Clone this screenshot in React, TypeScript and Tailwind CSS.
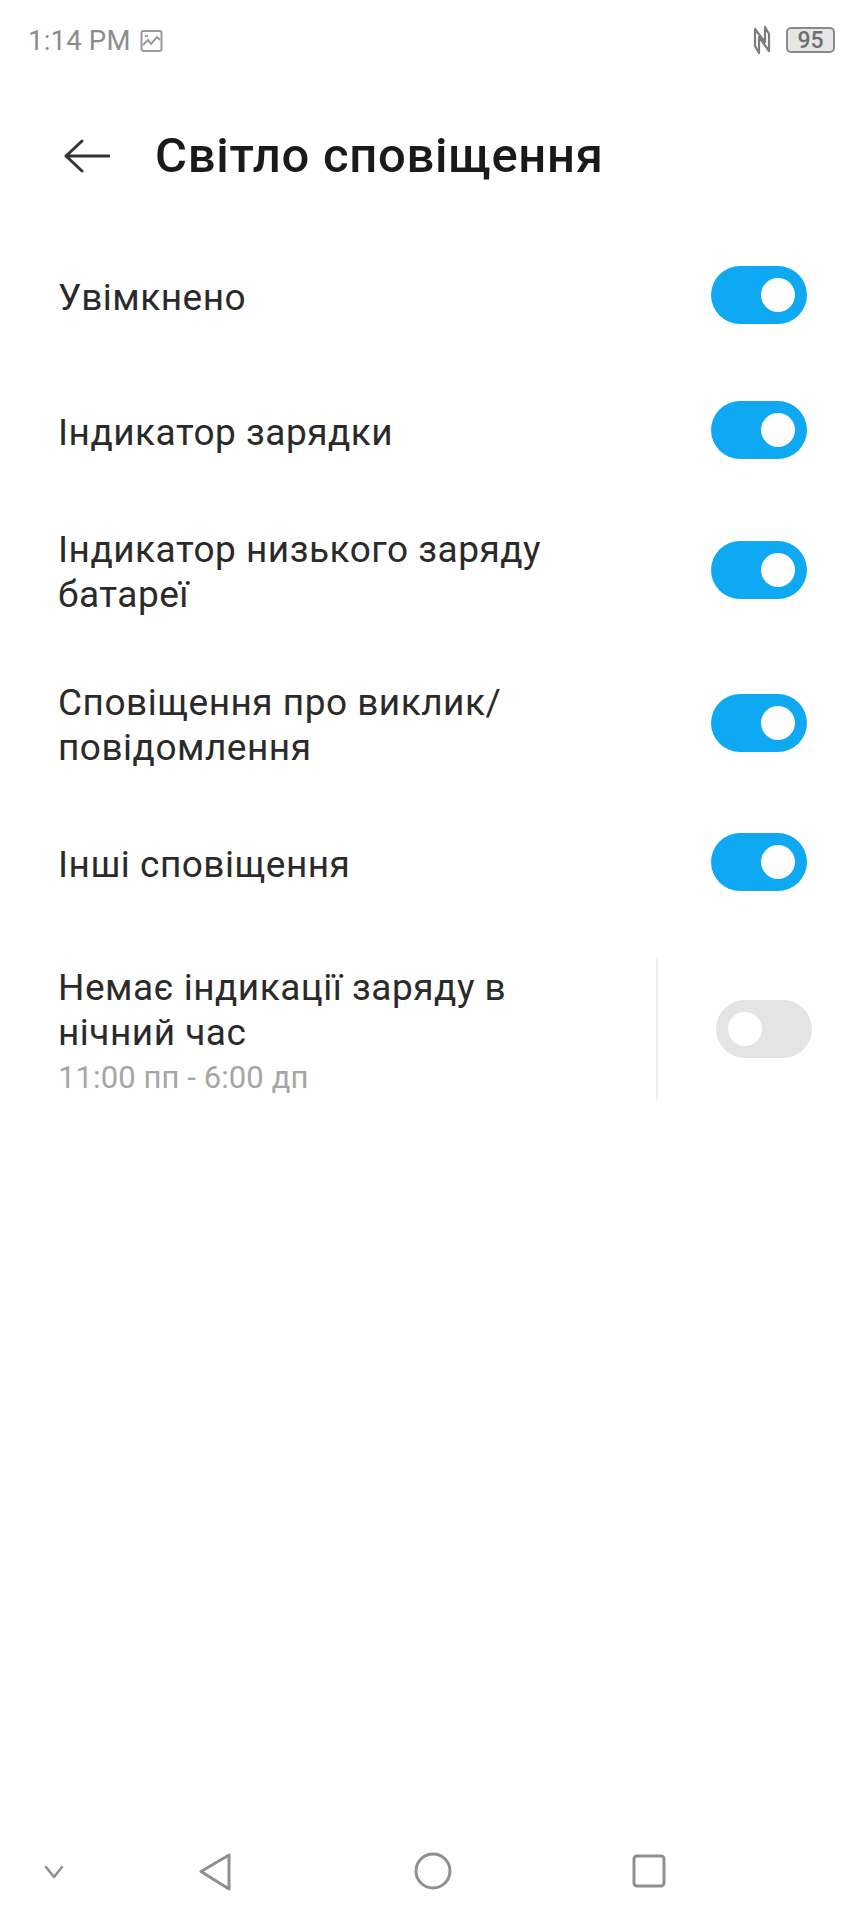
const font = { fontFamily: "Roboto, 'Noto Sans', sans-serif" };

function Toggle({ on = true }: { on?: boolean }) {
  return on ? (
    <div className="flex h-[58px] w-[96px] shrink-0 items-center justify-end rounded-full bg-[#0fa8f2] pr-[12px]">
      <div className="h-[34px] w-[34px] rounded-full bg-white" />
    </div>
  ) : (
    <div className="flex h-[58px] w-[96px] shrink-0 items-center justify-start rounded-full bg-[#e4e4e4] pl-[12px]">
      <div className="h-[34px] w-[34px] rounded-full bg-white" />
    </div>
  );
}

function Row({ height, children }: { height: string; children: React.ReactNode }) {
  return (
    <div className={`flex items-center justify-between pl-[58px] pr-[57px] ${height}`}>
      <div className="pt-[4px] text-[37px] leading-[45px] tracking-[0.5px] text-[#2a2a2a]">{children}</div>
      <Toggle />
    </div>
  );
}

export default function App() {
  return (
    <div style={font} className="flex h-[1920px] w-[864px] flex-col overflow-hidden bg-white">
      <div className="flex h-[80px] items-center justify-between pl-[28px] pr-[29px]">
        <div className="flex items-center gap-[9px] pt-[2px]">
          <span className="text-[27.500px] leading-[30px] tracking-[0.2px] text-[#8c8c8c]">1:14 PM</span>
          <svg width="23" height="24" viewBox="0 0 23 24" fill="none" stroke="#999999" strokeWidth="2">
            <rect x="1.500" y="2" width="20" height="20" rx="2" />
            <path d="M3 16l5-5 3 4 6-7 3 3M5 7h3" />
          </svg>
        </div>
        <div className="flex items-center gap-[15px]">
          <svg width="18" height="30" viewBox="0 0 18 30" fill="none" stroke="#7d7d7d" strokeWidth="2.200" strokeLinejoin="round">
            <path d="M2 4v17l4 7V12l10 14V9l-4-7v15z" />
          </svg>
          <div className="flex h-[26px] w-[49px] items-center justify-center rounded-[5px] border-[2px] border-[#8a8a8a] bg-[#e6e6e6] text-[23px] font-medium leading-none text-[#6f6f6f]">
            95
          </div>
        </div>
      </div>

      <div className="mt-[38px] flex h-[76px] items-center pl-[64px]">
        <svg width="46" height="34" viewBox="0 0 46 34" fill="none" stroke="#333333" strokeWidth="3" strokeLinecap="round" strokeLinejoin="round">
          <path d="M45 17H2M18 2L2 17l16 15" />
        </svg>
        <span className="ml-[45px] text-[49px] font-medium leading-[56px] tracking-[0.7px] text-[#1a1a1a]">Світло сповіщення</span>
      </div>

      <div className="h-[29px]" />

      <Row height="h-[144px]">Увімкнено</Row>
      <Row height="h-[126px]">Індикатор зарядки</Row>
      <Row height="h-[153px]">
        Індикатор низького заряду
        <br />
        батареї
      </Row>
      <Row height="h-[153px]">
        Сповіщення про виклик/
        <br />
        повідомлення
      </Row>
      <Row height="h-[126px]">Інші сповіщення</Row>

      <div className="flex h-[208px] items-center pl-[58px] pr-[52px]">
        <div className="flex-1 pt-[3px]">
          <div className="text-[37px] leading-[45px] tracking-[0.5px] text-[#2a2a2a]">
            Немає індикації заряду в
            <br />
            нічний час
          </div>
          <div className="mt-[5px] text-[31px] leading-[36px] tracking-[0.1px] text-[#a6a6a6]">11:00 пп - 6:00 дп</div>
        </div>
        <div className="mr-[58px] h-[144px] w-[2px] bg-[#efefef]" />
        <Toggle on={false} />
      </div>

      <div className="flex-1" />

      <div className="relative h-[100px]">
        <svg className="absolute left-[43px] top-[44px]" width="24" height="18" viewBox="0 0 24 18" fill="none" stroke="#8f8f8f" strokeWidth="2.500" strokeLinecap="round" strokeLinejoin="round">
          <path d="M3 3l8 10 8-10" />
        </svg>
        <svg className="absolute left-[198px] top-[32px]" width="34" height="40" viewBox="0 0 34 40" fill="none" stroke="#8f8f8f" strokeWidth="3" strokeLinejoin="round">
          <path d="M31 3v34L3 19.500z" />
        </svg>
        <svg className="absolute left-[414px] top-[32px]" width="38" height="38" viewBox="0 0 38 38" fill="none" stroke="#8f8f8f" strokeWidth="3">
          <circle cx="19" cy="19" r="17" />
        </svg>
        <svg className="absolute left-[632px] top-[34px]" width="34" height="34" viewBox="0 0 34 34" fill="none" stroke="#8f8f8f" strokeWidth="3">
          <rect x="2" y="2" width="30" height="30" rx="3" />
        </svg>
      </div>
    </div>
  );
}
